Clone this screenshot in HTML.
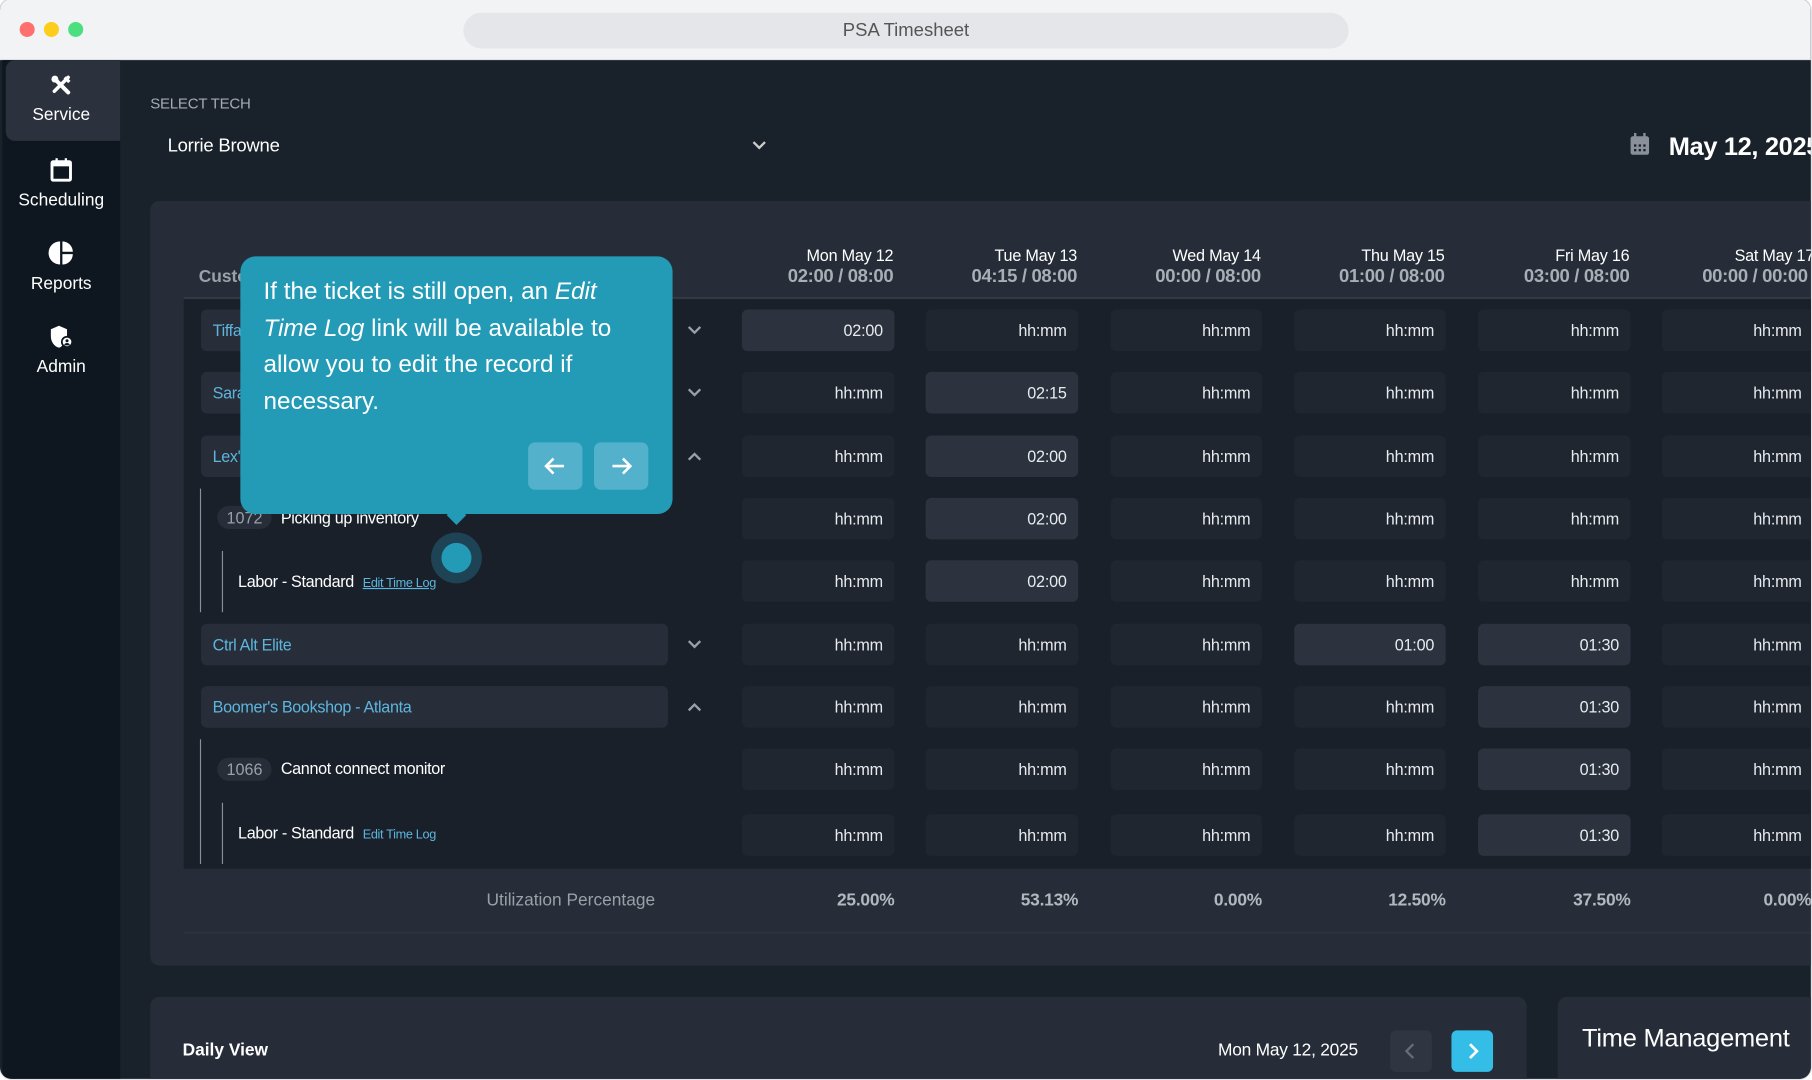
<!DOCTYPE html>
<html><head><meta charset="utf-8"><style>
*{box-sizing:border-box;margin:0;padding:0}
html,body{width:1812px;height:1080px;overflow:hidden;background:#fff;font-family:"Liberation Sans",sans-serif}
#w{position:absolute;left:0;top:0;width:1568px;height:935px;transform:scale(1.15561,1.15508);transform-origin:0 0;overflow:hidden}
.a{position:absolute}
.win{left:0;top:-1px;width:1567px;height:935px;border-radius:10px;overflow:hidden;background:#19212b;box-shadow:0 0 0 1px #e2e3e6}
.tb{left:0;top:0;width:1567px;height:53px;background:#f2f3f5;border-bottom:1px solid #e0e1e4}
.dot{width:13px;height:13px;border-radius:50%;top:20px}
.url{left:401px;top:12px;width:766px;height:31px;border-radius:16px;background:#e5e6e9;color:#555;font-size:16px;text-align:center;line-height:31px}
.side{left:2px;top:53px;width:102px;height:882px;background:#0e161f}
.nav{width:102px;text-align:center;color:#fff;font-size:15px}
.cell{height:36px;border-radius:5px;background:#1f2630;color:#e8eaed;font-size:14px;text-align:right;padding-right:10px;line-height:36px;letter-spacing:-0.2px}
.f{background:#2c333e}
.cust{left:173px;width:404px;height:36px;border-radius:5px;background:#272e39;color:#5db5dd;font-size:14px;line-height:36px;padding-left:10px;letter-spacing:-0.3px}
.chev{left:593px;width:14px;height:14px}
.hd{text-align:right;width:200px}
.hd1{color:#fff;font-size:14px;letter-spacing:-0.2px}
.hd2{color:#a9aeb6;font-size:16px;font-weight:bold;margin-top:2px;letter-spacing:-0.3px}
.ut{color:#b3b8bf;font-size:15px;font-weight:bold;text-align:right;width:150px;top:772px;letter-spacing:-0.2px}
.txt{color:#fff;font-size:14px;letter-spacing:-0.3px}
.badge{border-radius:12px;background:#272e39;color:#9aa0a8;font-size:14px;padding:2px 8px}
</style></head><body><div id="w">
<div class="a win">
<div class="a tb">
<div class="a dot" style="left:17px;background:#fe6f6e"></div>
<div class="a dot" style="left:38px;background:#fdcd1c"></div>
<div class="a dot" style="left:59px;background:#4bdf80"></div>
<div class="a url">PSA Timesheet</div>
</div>
<div class="a side">
<div class="a" style="left:3px;top:0;width:99px;height:70px;background:#2b323d;border-radius:8px 0 0 8px"></div>
<div class="a nav" style="top:12px"><svg width="20" height="20" viewBox="0 0 20 20"><path d="M4 4l12 12" stroke="#fff" stroke-width="3.5" stroke-linecap="round"/><path d="M16 3L4 15" stroke="#fff" stroke-width="3" stroke-linecap="round"/><circle cx="4.5" cy="4.5" r="3" fill="#fff"/><path d="M14 2l4 4-2 2-4-4z" fill="#fff"/></svg><div style="margin-top:3px">Service</div></div>
<div class="a nav" style="top:84px"><svg width="20" height="22" viewBox="0 0 20 22"><rect x="2" y="4" width="16" height="16" rx="1" fill="none" stroke="#fff" stroke-width="2.5"/><rect x="2" y="4" width="16" height="4" fill="#fff"/><rect x="5" y="1" width="2" height="4" fill="#fff"/><rect x="13" y="1" width="2" height="4" fill="#fff"/></svg><div style="margin-top:3px">Scheduling</div></div>
<div class="a nav" style="top:156px"><svg width="22" height="22" viewBox="0 0 22 22"><path d="M10 1A10 10 0 0 0 10 21Z" fill="#fff"/><path d="M12 1A9 9 0 0 1 21 10H12Z" fill="#fff"/><path d="M12 12H21A9 9 0 0 1 12 21Z" fill="#fff"/></svg><div style="margin-top:3px">Reports</div></div>
<div class="a nav" style="top:229px"><svg width="22" height="22" viewBox="0 0 22 22"><path d="M9 1L2 4v6c0 5 3 9 7 10 1-0 2-1 3-2A5 5 0 0 1 16 10V4Z" fill="#fff"/><circle cx="16" cy="15" r="4.5" fill="#fff" stroke="#0e161f" stroke-width="1.5"/><circle cx="16" cy="14" r="1.3" fill="#0e161f"/><path d="M13.5 18a2.5 2 0 0 1 5 0Z" fill="#0e161f"/></svg><div style="margin-top:2px">Admin</div></div>
</div>

<div class="a" style="left:130px;top:83px;color:#a6abb2;font-size:13px;letter-spacing:-0.2px">SELECT TECH</div>
<div class="a" style="left:145px;top:119px;color:#fff;font-size:16px;letter-spacing:-0.2px">Lorrie Browne</div>
<svg class="a" style="left:650px;top:122px" width="14" height="10" viewBox="0 0 14 10"><path d="M2 2l5 5 5-5" stroke="#ccc" stroke-width="2" fill="none"/></svg>
<svg class="a" style="left:1410px;top:116px" width="18" height="20" viewBox="0 0 18 20"><rect x="1" y="3" width="16" height="16" rx="2" fill="#8a9099"/><rect x="4" y="0" width="2" height="5" fill="#8a9099"/><rect x="12" y="0" width="2" height="5" fill="#8a9099"/><g fill="#19212b"><rect x="4" y="10" width="2" height="2"/><rect x="8" y="10" width="2" height="2"/><rect x="12" y="10" width="2" height="2"/><rect x="4" y="14" width="2" height="2"/><rect x="8" y="14" width="2" height="2"/><rect x="12" y="14" width="2" height="2"/></g></svg>
<div class="a" style="left:1444px;top:115px;color:#fff;font-size:22px;font-weight:bold;white-space:nowrap;letter-spacing:-0.3px">May 12, 2025</div>

<div class="a" style="left:130px;top:175px;width:1450px;height:662px;background:#262d38;border-radius:8px"></div>
<div class="a" style="left:172px;top:232px;color:#9ba1a9;font-size:15px;font-weight:bold">Customer</div>
<div class="a hd" style="left:573px;top:214px"><div class="hd1">Mon May 12</div><div class="hd2">02:00 / 08:00</div></div>
<div class="a hd" style="left:732px;top:214px"><div class="hd1">Tue May 13</div><div class="hd2">04:15 / 08:00</div></div>
<div class="a hd" style="left:891px;top:214px"><div class="hd1">Wed May 14</div><div class="hd2">00:00 / 08:00</div></div>
<div class="a hd" style="left:1050px;top:214px"><div class="hd1">Thu May 15</div><div class="hd2">01:00 / 08:00</div></div>
<div class="a hd" style="left:1210px;top:214px"><div class="hd1">Fri May 16</div><div class="hd2">03:00 / 08:00</div></div>
<div class="a" style="left:1369px;top:214px;width:260px;white-space:nowrap;padding-left:132px"><div class="hd1">Sat May 17</div><div class="hd2" style="margin-left:-28px">00:00 / 00:00</div></div>
<div class="a" style="left:159px;top:258px;width:1420px;height:2px;background:#323944"></div>
<div class="a" style="left:159px;top:260px;width:1420px;height:493px;background:#19202a"></div>

<div class="a cust" style="top:269px;left:174px">Tiffany's Treats</div>
<div class="a cust" style="top:323px;left:174px">Sarah's Salon</div>
<div class="a cust" style="top:378px;left:174px">Lex's Laundromat</div>
<div class="a cust" style="top:541px;left:174px">Ctrl Alt Elite</div>
<div class="a cust" style="top:595px;left:174px">Boomer's Bookshop - Atlanta</div>
<svg class="a chev" style="top:280px;left:594px" viewBox="0 0 14 14"><path d="M2 4l5 5 5-5" stroke="#9aa0a8" stroke-width="2" fill="none"/></svg>
<svg class="a chev" style="top:334px;left:594px" viewBox="0 0 14 14"><path d="M2 4l5 5 5-5" stroke="#9aa0a8" stroke-width="2" fill="none"/></svg>
<svg class="a chev" style="top:389px;left:594px" viewBox="0 0 14 14"><path d="M2 10l5-5 5 5" stroke="#9aa0a8" stroke-width="2" fill="none"/></svg>
<svg class="a chev" style="top:552px;left:594px" viewBox="0 0 14 14"><path d="M2 4l5 5 5-5" stroke="#9aa0a8" stroke-width="2" fill="none"/></svg>
<svg class="a chev" style="top:606px;left:594px" viewBox="0 0 14 14"><path d="M2 10l5-5 5 5" stroke="#9aa0a8" stroke-width="2" fill="none"/></svg>

<div class="a" style="left:173px;top:424px;width:1px;height:107px;background:#8a9099"></div>
<div class="a" style="left:192px;top:478px;width:1px;height:53px;background:#8a9099"></div>
<div class="a badge" style="left:188px;top:439px">1072</div>
<div class="a txt" style="left:243px;top:441px">Picking up inventory</div>
<div class="a txt" style="left:206px;top:496px">Labor - Standard <span style="color:#5db5dd;font-size:11px;text-decoration:underline;margin-left:4px">Edit Time Log</span></div>

<div class="a" style="left:173px;top:641px;width:1px;height:108px;background:#8a9099"></div>
<div class="a" style="left:192px;top:696px;width:1px;height:53px;background:#8a9099"></div>
<div class="a badge" style="left:188px;top:657px">1066</div>
<div class="a txt" style="left:243px;top:658px">Cannot connect monitor</div>
<div class="a txt" style="left:206px;top:714px">Labor - Standard <span style="color:#5db5dd;font-size:11px;margin-left:4px">Edit Time Log</span></div>

<div id="cells"></div>
<script>
var xs=[642,801,961,1120,1279,1438],ws=[132,132,131,131,132,140],ys=[269,323,378,432,486,541,595,649,706];
var filled={"0,0":"02:00","1,1":"02:15","2,1":"02:00","3,1":"02:00","4,1":"02:00","5,3":"01:00","5,4":"01:30","6,4":"01:30","7,4":"01:30","8,4":"01:30"};
var h="";for(var r=0;r<9;r++)for(var c=0;c<6;c++){var k=r+","+c;var v=filled[k];h+='<div class="a cell'+(v?' f':'')+'" style="left:'+xs[c]+'px;top:'+ys[r]+'px;width:'+ws[c]+'px'+(c==5?';padding-right:19px':'')+'">'+(v||'hh:mm')+'</div>';}
document.getElementById('cells').innerHTML=h;
</script>

<div class="a" style="left:421px;top:772px;color:#9aa0a8;font-size:15px">Utilization Percentage</div>
<div class="a ut" style="left:624px">25.00%</div>
<div class="a ut" style="left:783px">53.13%</div>
<div class="a ut" style="left:942px">0.00%</div>
<div class="a ut" style="left:1101px">12.50%</div>
<div class="a ut" style="left:1261px">37.50%</div>
<div class="a ut" style="left:1420px;width:180px;text-align:left;padding-left:106px">0.00%</div>
<div class="a" style="left:159px;top:808px;width:1420px;height:1px;background:#2f3641"></div>

<div class="a" style="left:130px;top:864px;width:1191px;height:90px;background:#262d38;border-radius:8px"></div>
<div class="a" style="left:158px;top:902px;color:#fff;font-size:15px;font-weight:bold">Daily View</div>
<div class="a" style="left:1054px;top:902px;color:#fff;font-size:15px;letter-spacing:-0.2px">Mon May 12, 2025</div>
<div class="a" style="left:1203px;top:893px;width:36px;height:36px;border-radius:5px;background:#2f3641"><svg width="36" height="36" viewBox="0 0 36 36"><path d="M20 12l-6 6 6 6" stroke="#666c74" stroke-width="2" fill="none"/></svg></div>
<div class="a" style="left:1256px;top:893px;width:36px;height:36px;border-radius:5px;background:#34bde6"><svg width="36" height="36" viewBox="0 0 36 36"><path d="M16 12l6 6-6 6" stroke="#fff" stroke-width="2.4" fill="none"/></svg></div>
<div class="a" style="left:1348px;top:864px;width:240px;height:90px;background:#262d38;border-radius:8px"></div>
<div class="a" style="left:1369px;top:887px;color:#fff;font-size:22px;letter-spacing:-0.2px">Time Management</div>

<div class="a" style="left:208px;top:223px;width:374px;height:223px;background:#239bb6;border-radius:13px"></div>
<div class="a" style="left:389px;top:441px;width:12px;height:12px;background:#239bb6;transform:rotate(45deg)"></div>
<div class="a" style="left:228px;top:238px;width:325px;color:#fff;font-size:21px;line-height:31.5px">If the ticket is still open, an <i>Edit</i> <i>Time Log</i> link will be available to allow you to edit the record if necessary.</div>
<div class="a" style="left:457px;top:384px;width:47px;height:41px;border-radius:6px;background:#53b1cb"><svg width="47" height="41" viewBox="0 0 47 41"><path d="M31 20.5H16M22 14l-6.5 6.5L22 27" stroke="#fff" stroke-width="2.2" fill="none"/></svg></div>
<div class="a" style="left:514px;top:384px;width:47px;height:41px;border-radius:6px;background:#53b1cb"><svg width="47" height="41" viewBox="0 0 47 41"><path d="M16 20.5H31M25 14l6.5 6.5L25 27" stroke="#fff" stroke-width="2.2" fill="none"/></svg></div>
<div class="a" style="left:373px;top:462px;width:44px;height:44px;border-radius:50%;background:#1d4354"></div>
<div class="a" style="left:382px;top:471px;width:26px;height:26px;border-radius:50%;background:#239bb6"></div>
</div>
</div></body></html>
